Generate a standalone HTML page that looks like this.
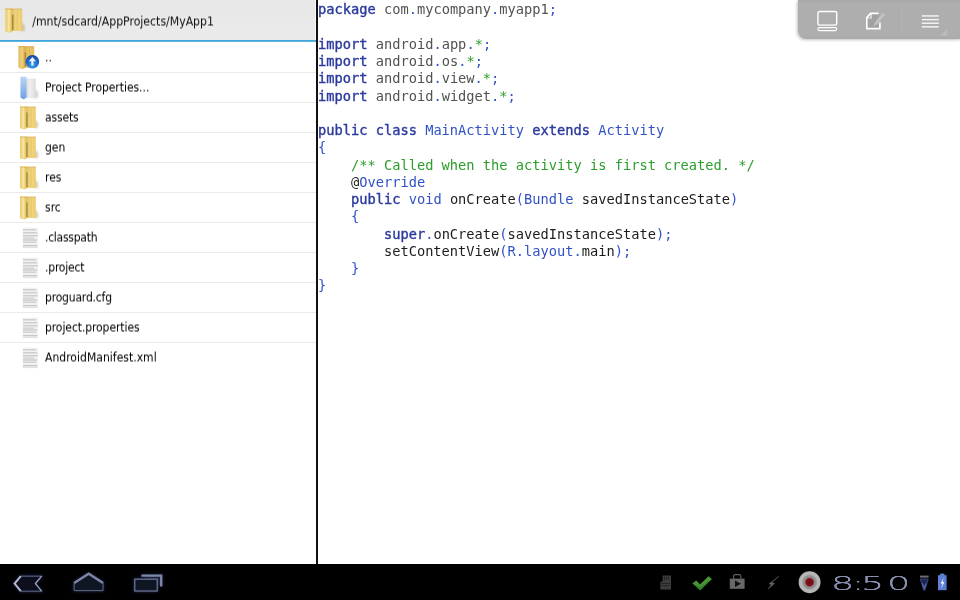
<!DOCTYPE html>
<html><head><meta charset="utf-8"><title>MyApp1</title>
<style>
html,body{margin:0;padding:0;}
body{width:960px;height:600px;overflow:hidden;background:#fff;position:relative;font-family:"DejaVu Sans Condensed","DejaVu Sans","Liberation Sans",sans-serif;}
#left{position:absolute;left:0;top:0;width:316px;height:564px;overflow:hidden;will-change:transform;}
#hdr{position:absolute;left:0;top:0;width:316px;height:40px;background:linear-gradient(#e7e7e7,#ebebeb);border-bottom:none;}
#hline{position:absolute;left:0;top:39.6px;width:316px;height:2px;background:linear-gradient(#3a9cd6,#5fbde8);}
#hdr .t{position:absolute;left:32.3px;top:13px;font-size:12.15px;line-height:16px;color:#111;filter:url(#half);white-space:nowrap;}
#hdr svg{position:absolute;left:3.4px;top:6.5px;}
.row{position:absolute;left:0;width:316px;height:29.5px;border-bottom:1px solid #eaeaea;}
.row.last{border-bottom-color:transparent;}
.row .t{position:absolute;left:45px;top:7px;filter:url(#half);font-size:12px;line-height:16px;color:#000;white-space:nowrap;}
.row .ic{position:absolute;left:18.4px;top:2.6px;}
#edge{position:absolute;left:314.6px;top:0;width:1.4px;height:39.6px;background:rgba(255,255,255,.7);}
#div{position:absolute;left:316px;top:0;width:2px;height:564px;background:#111;}
#code{position:absolute;left:318px;top:0;width:642px;height:564px;overflow:hidden;will-change:transform;}
#code pre{margin:0;position:absolute;left:0;top:1.3px;font-family:"DejaVu Sans Mono","Liberation Mono",monospace;font-size:13.7px;line-height:17.25px;color:#1c1c1c;}
.k{color:#2b3a9e;-webkit-text-stroke:0.38px #2b3a9e;}
.i{color:#3052c6;}
.c{color:#2c9e2c;}
.p{color:#525252;}
#bar{position:absolute;left:0;top:564px;width:960px;height:36px;background:#000;}
#clock span{position:absolute;top:7.5px;font-family:"DejaVu Sans Light","DejaVu Sans","Liberation Sans",sans-serif;font-weight:200;font-size:19.6px;line-height:24px;color:#8990b0;transform-origin:0 0;transform:scaleX(1.87);text-shadow:0 0.4px 0 #8990b0,0 -0.4px 0 #8990b0;}
#tb{position:absolute;left:798px;top:0;width:162px;height:39.4px;background:linear-gradient(#a8a8a8 0,#aeaeae 3px,#aeaeae 35px,#aaaaaa 39px);border-bottom-left-radius:8px;box-shadow:-0.5px 1px 3px rgba(0,0,0,.25);}
</style></head><body>

<svg width="0" height="0" style="position:absolute">
<defs>
<linearGradient id="gF1" x1="0" y1="0" x2="1" y2="0"><stop offset="0" stop-color="#ecce74"/><stop offset="0.55" stop-color="#f3dc8e"/><stop offset="1" stop-color="#dcb85a"/></linearGradient>
<linearGradient id="gF2" x1="0" y1="0" x2="1" y2="0"><stop offset="0" stop-color="#e2c062"/><stop offset="0.45" stop-color="#f2d984"/><stop offset="1" stop-color="#ebcb6c"/></linearGradient>
<linearGradient id="gB1" x1="0" y1="0" x2="0" y2="1"><stop offset="0" stop-color="#bcd6f5"/><stop offset="1" stop-color="#6f9fe0"/></linearGradient>
<linearGradient id="gB2" x1="0" y1="0" x2="1" y2="0"><stop offset="0" stop-color="#d8dde6"/><stop offset="0.4" stop-color="#eeeef2"/><stop offset="1" stop-color="#dcdce0"/></linearGradient>
<radialGradient id="gUp" cx="0.5" cy="0.75" r="0.8"><stop offset="0" stop-color="#39a5ee"/><stop offset="0.6" stop-color="#1c62c8"/><stop offset="1" stop-color="#123f96"/></radialGradient>
<filter id="half" x="-5%" y="-25%" width="110%" height="150%" color-interpolation-filters="sRGB"><feConvolveMatrix order="1 2" kernelMatrix="0.5 0.5" targetY="1" edgeMode="none" preserveAlpha="false"/></filter>
<filter id="bl" x="-20%" y="-20%" width="140%" height="140%"><feGaussianBlur stdDeviation="0.45"/></filter>
<filter id="bl2" x="-30%" y="-30%" width="160%" height="160%"><feGaussianBlur stdDeviation="0.8"/></filter>
<g id="folder">
  <path d="M16.6 13.5 L20 16.5 L20 21.6 L16 21.6 Z" fill="#a89868" opacity="0.5" filter="url(#bl2)"/>
  <g filter="url(#bl)">
  <rect x="8.6" y="2" width="9.2" height="19.6" rx="0.8" fill="url(#gF2)"/>
  <path d="M2 1.3 L8.8 1.3 L8.8 21.8 L6.4 23.2 L2 21.8 Z" fill="url(#gF1)"/>
  <rect x="2" y="1.3" width="15.8" height="1.2" fill="#cfa94a" opacity="0.55"/>
  <rect x="8.2" y="7" width="1.5" height="13.8" fill="#9c8236" opacity="0.85"/>
  <rect x="12.6" y="2.6" width="0.9" height="18.4" fill="#d6ae4e" opacity="0.55"/>
  <rect x="4.6" y="2.4" width="1.6" height="19.4" fill="#f9e9ae" opacity="0.6"/>
  </g>
</g>
<g id="prop">
  <path d="M16.5 13 L20.2 16.5 L20 21.5 L16 21.5 Z" fill="#aaa" opacity="0.55" filter="url(#bl2)"/>
  <g filter="url(#bl)">
  <rect x="8.2" y="3.2" width="9.6" height="18.6" rx="0.8" fill="url(#gB2)"/>
  <path d="M2.4 1.6 L8.6 1.6 L8.6 21 L5.8 23.2 L2.4 21.2 Z" fill="url(#gB1)"/>
  <rect x="11" y="3.5" width="1.1" height="18" fill="#f6f6d8" opacity="0.55"/>
  </g>
</g>
<g id="file">
  <g filter="url(#bl)">
  <rect x="4.6" y="2.6" width="15.6" height="20.2" fill="#f2f2f2"/>
  <g fill="#c6c6c6">
  <rect x="5" y="4.2" width="13.2" height="1.2"/>
  <rect x="5" y="7.2" width="14.2" height="1.2"/>
  <rect x="5" y="10.2" width="14.7" height="1.2"/>
  <rect x="5" y="12.6" width="11.2" height="1"/>
  <rect x="5" y="14.4" width="14.2" height="1.2"/>
  <rect x="5" y="16.6" width="13.2" height="1.1"/>
  <rect x="5" y="20" width="14.2" height="1.3"/>
  </g>
  <rect x="5" y="22.2" width="14.5" height="0.9" fill="#ddd"/>
  </g>
</g>
</defs></svg>

<div id="left">
<div id="hdr"><svg width="26" height="29" viewBox="0 0 24 26" preserveAspectRatio="none"><use href="#folder"/></svg><span class="t">/mnt/sdcard/AppProjects/MyApp1</span></div><div id="hline"></div>
<div class="row" style="top:42px"><svg class="ic" width="24" height="27.6" viewBox="0 0 24 26" preserveAspectRatio="none"><g transform="translate(-1.6,-0.3)"><use href="#folder"/><path d="M2 1.3 L17.8 1.3 L17.8 21.6 L8.8 21.8 L6.4 23.2 L2 21.8 Z" fill="#cf8a24" opacity="0.22" filter="url(#bl)"/></g><g filter="url(#bl)"><ellipse cx="14.4" cy="15.75" rx="6.8" ry="6.4" fill="url(#gUp)"/><path d="M14.4 11.4 L18 15.4 L15.5 15.4 L15.5 19.2 L13.3 19.2 L13.3 15.4 L10.8 15.4 Z" fill="#fff" opacity="0.92"/></g></svg><span class="t">..</span></div>
<div class="row" style="top:72px"><svg class="ic" width="24" height="27.6" viewBox="0 0 24 26" preserveAspectRatio="none"><use href="#prop"/></svg><span class="t" style="letter-spacing:-0.04px">Project Properties...</span></div>
<div class="row" style="top:102px"><svg class="ic" width="24" height="27.6" viewBox="0 0 24 26" preserveAspectRatio="none"><use href="#folder"/></svg><span class="t" style="letter-spacing:-0.15px">assets</span></div>
<div class="row" style="top:132px"><svg class="ic" width="24" height="27.6" viewBox="0 0 24 26" preserveAspectRatio="none"><use href="#folder"/></svg><span class="t">gen</span></div>
<div class="row" style="top:162px"><svg class="ic" width="24" height="27.6" viewBox="0 0 24 26" preserveAspectRatio="none"><use href="#folder"/></svg><span class="t">res</span></div>
<div class="row" style="top:192px"><svg class="ic" width="24" height="27.6" viewBox="0 0 24 26" preserveAspectRatio="none"><use href="#folder"/></svg><span class="t">src</span></div>
<div class="row" style="top:222px"><svg class="ic" width="24" height="26" viewBox="0 0 24 26"><use href="#file"/></svg><span class="t" style="letter-spacing:-0.25px">.classpath</span></div>
<div class="row" style="top:252px"><svg class="ic" width="24" height="26" viewBox="0 0 24 26"><use href="#file"/></svg><span class="t" style="letter-spacing:-0.2px">.project</span></div>
<div class="row" style="top:282px"><svg class="ic" width="24" height="26" viewBox="0 0 24 26"><use href="#file"/></svg><span class="t" style="letter-spacing:-0.18px">proguard.cfg</span></div>
<div class="row" style="top:312px"><svg class="ic" width="24" height="26" viewBox="0 0 24 26"><use href="#file"/></svg><span class="t" style="letter-spacing:-0.08px">project.properties</span></div>
<div class="row last" style="top:342px"><svg class="ic" width="24" height="26" viewBox="0 0 24 26"><use href="#file"/></svg><span class="t" style="letter-spacing:0.03px">AndroidManifest.xml</span></div>
</div>
<div id="edge"></div><div id="div"></div>
<div id="code"><pre><span class="k">package</span> <span class="p">com</span><span class="i">.</span><span class="p">mycompany</span><span class="i">.</span><span class="p">myapp1</span><span class="i">;</span>

<span class="k">import</span> <span class="p">android</span><span class="i">.</span><span class="p">app</span><span class="i">.</span><span class="c">*</span><span class="i">;</span>
<span class="k">import</span> <span class="p">android</span><span class="i">.</span><span class="p">os</span><span class="i">.</span><span class="c">*</span><span class="i">;</span>
<span class="k">import</span> <span class="p">android</span><span class="i">.</span><span class="p">view</span><span class="i">.</span><span class="c">*</span><span class="i">;</span>
<span class="k">import</span> <span class="p">android</span><span class="i">.</span><span class="p">widget</span><span class="i">.</span><span class="c">*</span><span class="i">;</span>

<span class="k">public class</span> <span class="i">MainActivity</span> <span class="k">extends</span> <span class="i">Activity</span>
<span class="i">{</span>
    <span class="c">/** Called when the activity is first created. */</span>
    @<span class="i">Override</span>
    <span class="k">public</span> <span class="i">void</span> onCreate<span class="i">(Bundle</span> savedInstanceState<span class="i">)</span>
    <span class="i">{</span>
        <span class="k">super</span><span class="i">.</span>onCreate<span class="i">(</span>savedInstanceState<span class="i">);</span>
        setContentView<span class="i">(R.layout.</span>main<span class="i">);</span>
    <span class="i">}</span>
<span class="i">}</span></pre></div>
<div id="tb">
<svg width="162" height="42" viewBox="0 0 162 42" style="position:absolute;left:0;top:0">
<g fill="none" stroke="#fff" stroke-width="1.4" stroke-linejoin="round">
<rect x="19.9" y="11.5" width="18.8" height="13.6" rx="1.8"/>
<rect x="19.9" y="27.6" width="18.8" height="3" rx="1.5" stroke-width="1.1"/>
<path d="M80.6 13.4 L72.6 13.4 L68.8 17.6 L68.8 28.7 L81.9 28.7 L81.9 22.5" stroke-width="1.7" fill="#a2a2a2"/>
<path d="M73.2 13.8 L73.2 18 L69.2 18" stroke-width="1.2" opacity="0.8"/>
</g>
<path d="M86 13.6 L77.4 24.2" stroke="#c2c2c2" stroke-width="3" fill="none"/>
<path d="M75.2 26.2 L76.6 23.6 L78 25 Z" fill="#bdbdbd"/>
<rect x="101.4" y="8" width="1" height="23" fill="#a4a4a4"/>
<rect x="102.4" y="8" width="1" height="23" fill="#b6b6b6"/>
<g fill="#f4f4f4">
<rect x="123.8" y="15.2" width="17" height="1.45"/>
<rect x="123.8" y="18.9" width="17" height="1.45"/>
<rect x="123.8" y="22.5" width="17" height="1.45"/>
<rect x="123.8" y="26.1" width="17" height="1.45"/>
</g>
<path d="M149 29 L149 35.5 L142.5 35.5 Z" fill="#bcbcbc"/>
</svg></div>
<div id="bar">
<svg width="960" height="36" viewBox="0 564 960 36" style="position:absolute;left:0;top:0">
<defs><filter id="glow" x="-20%" y="-30%" width="140%" height="160%"><feGaussianBlur stdDeviation="1.6"/></filter>
<filter id="b3" x="-20%" y="-20%" width="140%" height="140%"><feGaussianBlur stdDeviation="0.5"/></filter>
<radialGradient id="rec" cx="0.5" cy="0.5" r="0.5"><stop offset="0" stop-color="#6a0812"/><stop offset="0.32" stop-color="#86101c"/><stop offset="0.43" stop-color="#8e8686"/><stop offset="0.62" stop-color="#999999"/><stop offset="0.72" stop-color="#bababa"/><stop offset="0.93" stop-color="#b2b2b2"/><stop offset="1" stop-color="#555"/></radialGradient>
</defs>
<!-- back -->
<g filter="url(#glow)" opacity="0.55" fill="#2a3860" stroke="#3a4a80" stroke-width="2">
<path d="M14.6 583.6 L20.8 576.2 L41.6 576.2 L35.4 583.6 L41.6 591.2 L20.8 591.2 Z"/>
<path d="M88.7 573.4 L103 582.6 L103 590.6 L74.2 590.6 L74.2 582.6 Z"/>
<path d="M134.6 579 H157.4 V591 H134.6 Z M141.4 575.2 H161.6 V586.4"/>
</g>
<g filter="url(#b3)">
<path d="M14.6 583.6 L20.8 576.2 L41.6 576.2 L35.4 583.6 L41.6 591.2 L20.8 591.2 Z" fill="#0d111f" stroke="#5f6788" stroke-width="1"/>
<path d="M20.8 576.2 L14.6 583.6 L20.8 591.2" fill="none" stroke="#b0b6cc" stroke-width="2"/>
<path d="M41.6 576.2 L35.4 583.6 L41.6 591.2" fill="none" stroke="#9aa1bd" stroke-width="1.3"/>
<!-- home -->
<path d="M88.7 573.4 L103 582.6 L103 590.6 L74.2 590.6 L74.2 582.6 Z" fill="#0e1220" stroke="#5f6788" stroke-width="1"/>
<path d="M74.2 583 L88.7 573.8 L103 583" fill="none" stroke="#7d85a6" stroke-width="2.5"/>
<!-- recent -->
<path d="M141.4 575.6 H161.2 V586.4" fill="none" stroke="#7f87a8" stroke-width="2.3"/>
<rect x="134.8" y="579.2" width="22.4" height="11.8" fill="#0e1220" stroke="#727a9c" stroke-width="1.2"/>
</g>
<!-- status icons -->
<g filter="url(#b3)">
<path d="M662.6 575.6 H671 V589.4 H660.4 V581.6 H662.6 Z" fill="#3c3c3c"/>
<g fill="#222"><rect x="664" y="576.6" width="1" height="3"/><rect x="666" y="576.6" width="1" height="3"/><rect x="668" y="576.6" width="1" height="3"/><rect x="661.4" y="583" width="8.8" height="0.8"/><rect x="661.4" y="585.4" width="8.8" height="0.8"/></g>
<path d="M692.4 583.4 L696.2 580.6 L700 584.6 L708.6 576.2 L711.8 579.2 L700.2 590.4 Z" fill="#37802a"/>
<path d="M692.4 583.4 L696.2 580.6 L700 584.6 L708.6 576.2 L711.8 579.2 L700.2 587 Z" fill="#4ea336" opacity="0.6"/>
<path d="M729.8 578.6 H744.6 V588.8 H729.8 Z" fill="#686868"/>
<path d="M733.6 578.6 V576.2 Q733.6 574.6 735.2 574.6 H739.2 Q740.8 574.6 740.8 576.2 V578.6" fill="none" stroke="#606060" stroke-width="1.2"/>
<path d="M735 580.4 L741 583.7 L735 587 Z" fill="#111"/>
<path d="M778.8 576.4 L771.6 582.6 L774.6 583.4 L768.2 589 L771.4 584.6 L769 583.8 Z" fill="#666" stroke="#555" stroke-width="0.6"/>
<circle cx="809.6" cy="582.2" r="11.2" fill="url(#rec)"/>
</g>
<!-- wifi + battery -->
<g filter="url(#b3)">
<rect x="920" y="575.6" width="8.6" height="2" fill="#6e6e72"/>
<path d="M920.4 579 H928.2 L924.9 590.2 H923.7 Z" fill="#1a2550" stroke="#3d4c84" stroke-width="0.9"/>
<path d="M922.4 583.4 L924.3 588.2 L926.2 583.4" fill="none" stroke="#5870c0" stroke-width="1.1"/>
<rect x="938" y="575.2" width="8.6" height="15" fill="#5a7fd4"/>
<rect x="940.2" y="573.6" width="4.2" height="2" fill="#6a8ad8"/>
<path d="M943.8 577.4 L940.6 583.4 L942.6 583.6 L940.8 588.8 L944.4 582.2 L942.4 582 Z" fill="#fff"/>
</g>
</svg>
<div id="clock"><span style="left:830.7px">8</span><span style="left:852.1px">:</span><span style="left:861.4px">5</span><span style="left:887.4px">0</span></div>
</div>
</body></html>
